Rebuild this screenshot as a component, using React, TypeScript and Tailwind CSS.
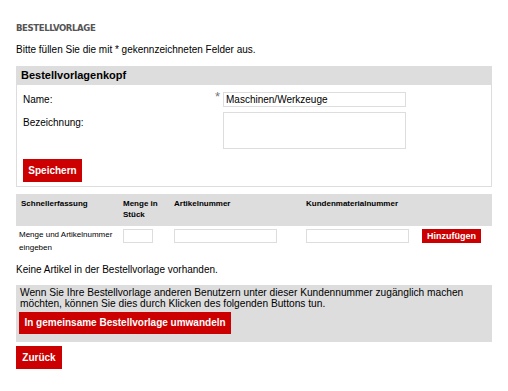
export default function App() {
  return (
    <div className="w-[508px] h-[391px] bg-white px-4 text-black font-['Liberation_Sans',Arial,sans-serif]">
      <div className="pt-[22px] h-[34px] text-[9.5px] leading-[12px] font-bold tracking-[-0.4px] text-[#555555] font-['Liberation_Sans_Narrow','DejaVu_Sans_Condensed',sans-serif]">
        BESTELLVORLAGE
      </div>
      <div className="mt-[10px] text-[10px] leading-[12px]">
        Bitte füllen Sie die mit * gekennzeichneten Felder aus.
      </div>

      {/* Kopf */}
      <div className="mt-[10px]">
        <div className="h-[19px] bg-[#dddddd] px-[5px] text-[11px] leading-[19px] font-bold">
          Bestellvorlagenkopf
        </div>
        <div className="border-x border-b border-[#dddddd] px-[6px] pt-[7px] pb-[4px]">
          <div className="flex items-center">
            <div className="w-[192px] text-[10px]">Name:</div>
            <div className="w-[8px] text-[13px] leading-[10px] text-[#777777] self-start">*</div>
            <input
              defaultValue="Maschinen/Werkzeuge"
              className="w-[183px] h-[15px] border border-[#dddddd] px-[2px] text-[10px] outline-none"
            />
          </div>
          <div className="flex mt-[5px]">
            <div className="w-[200px] text-[10px] pt-[3px]">Bezeichnung:</div>
            <textarea className="w-[183px] h-[37px] border border-[#dddddd] resize-none outline-none" />
          </div>
          <button className="mt-[10px] w-[59px] h-[23px] bg-[#cc0000] text-white text-[10px] font-bold">
            Speichern
          </button>
        </div>
      </div>

      {/* Schnellerfassung */}
      <div className="mt-[7px]">
        <div className="grid grid-cols-[107px_51px_132px_116px_62px] h-[32px] bg-[#dddddd] pt-[4px] text-[8px] leading-[11px] font-bold">
          <div className="pl-[5px]">Schnellerfassung</div>
          <div>Menge in<br />Stück</div>
          <div>Artikelnummer</div>
          <div>Kundenmaterialnummer</div>
          <div />
        </div>
        <div className="grid grid-cols-[107px_51px_132px_116px_62px] pt-[2px] text-[8px] leading-[13px]">
          <div className="pl-[3px]">Menge und Artikelnummer<br />eingeben</div>
          <div className="pt-[1px]">
            <input className="w-[30px] h-[14px] border border-[#dddddd] outline-none" />
          </div>
          <div className="pt-[1px]">
            <input className="w-[103px] h-[14px] border border-[#dddddd] outline-none" />
          </div>
          <div className="pt-[1px]">
            <input className="w-[103px] h-[14px] border border-[#dddddd] outline-none" />
          </div>
          <div className="pt-[1px]">
            <button className="w-[59px] h-[14px] bg-[#cc0000] text-white text-[9px] leading-[14px] font-bold">
              Hinzufügen
            </button>
          </div>
        </div>
      </div>

      <div className="mt-[10px] text-[10px] leading-[12px]">
        Keine Artikel in der Bestellvorlage vorhanden.
      </div>

      <div className="mt-[9px] bg-[#dddddd] px-[3px] pt-[2px] pb-[8px]">
        <div className="px-[1px] text-[10.2px] leading-[11px]">
          Wenn Sie Ihre Bestellvorlage anderen Benutzern unter dieser Kundennummer zugänglich machen
          möchten, können Sie dies durch Klicken des folgenden Buttons tun.
        </div>
        <button className="mt-[2px] w-[212px] h-[22px] bg-[#cc0000] text-white text-[10px] font-bold">
          In gemeinsame Bestellvorlage umwandeln
        </button>
      </div>

      <button className="mt-[4px] w-[46px] h-[23px] bg-[#cc0000] text-white text-[10px] font-bold">
        Zurück
      </button>
    </div>
  );
}
